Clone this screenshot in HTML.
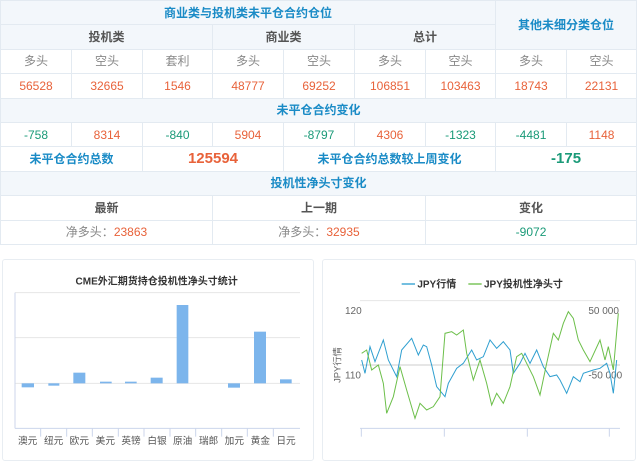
<!DOCTYPE html>
<html><head><meta charset="utf-8"><style>
body{margin:0;width:640px;height:450px;background:#fff;font-family:"Liberation Sans","Noto Sans CJK SC",sans-serif;overflow:hidden;position:relative}
table{position:absolute;left:0;top:0;width:636px;border-collapse:collapse;table-layout:fixed;font-size:12px}
td{border:1px solid #e3eaf1;text-align:center;height:23.4px;padding:0;line-height:14px}
.h{background:#f3f7fb;color:#1a8bc6;font-weight:bold}
.s{background:#f3f7fb;color:#555;font-weight:bold}
.g{color:#888}
.r{color:#e8623a}
.gr{color:#1a9a78}
.lb{color:#1a8bc6;font-weight:bold}
.big{font-size:15px;font-weight:bold}
.p{position:absolute;border:1px solid #e8edf2;border-radius:3px;background:#fff}
</style></head><body>
<table>
<colgroup><col style="width:71px"><col style="width:71px"><col style="width:70px"><col style="width:71px"><col style="width:71px"><col style="width:71px"><col style="width:70px"><col style="width:71px"><col style="width:70px"></colgroup>
<tr><td class="h" colspan="7">商业类与投机类未平仓合约仓位</td><td class="h" colspan="2" rowspan="2">其他未细分类仓位</td></tr>
<tr><td class="s" colspan="3">投机类</td><td class="s" colspan="2">商业类</td><td class="s" colspan="2">总计</td></tr>
<tr class="g"><td>多头</td><td>空头</td><td>套利</td><td>多头</td><td>空头</td><td>多头</td><td>空头</td><td>多头</td><td>空头</td></tr>
<tr class="r"><td>56528</td><td>32665</td><td>1546</td><td>48777</td><td>69252</td><td>106851</td><td>103463</td><td>18743</td><td>22131</td></tr>
<tr><td class="h" colspan="9">未平仓合约变化</td></tr>
<tr><td class="gr">-758</td><td class="r">8314</td><td class="gr">-840</td><td class="r">5904</td><td class="gr">-8797</td><td class="r">4306</td><td class="gr">-1323</td><td class="gr">-4481</td><td class="r">1148</td></tr>
<tr><td class="lb" colspan="2">未平仓合约总数</td><td class="r big" colspan="2">125594</td><td class="lb" colspan="3">未平仓合约总数较上周变化</td><td class="gr big" colspan="2">-175</td></tr>
<tr><td class="h" colspan="9">投机性净头寸变化</td></tr>
<tr><td class="s" colspan="3" style="background:#fff">最新</td><td class="s" colspan="3" style="background:#fff">上一期</td><td class="s" colspan="3" style="background:#fff">变化</td></tr>
<tr><td class="g" colspan="3">净多头：<span class="r">23863</span></td><td class="g" colspan="3">净多头：<span class="r">32935</span></td><td class="gr" colspan="3">-9072</td></tr>
</table>
<div class="p" style="left:2px;top:259px;width:310px;height:200px"></div>
<div class="p" style="left:322px;top:259px;width:312px;height:200px"></div>
<svg style="position:absolute;left:0;top:250px" width="320" height="200" viewBox="0 0 960 600" font-family="Liberation Sans,Noto Sans CJK SC,sans-serif">
<text x="470" y="104" font-size="30" font-weight="bold" fill="#333" text-anchor="middle">CME外汇期货持仓投机性净头寸统计</text>
<line x1="45" y1="128" x2="900" y2="128" stroke="#e6e6e6" stroke-width="3"/>
<line x1="45" y1="263" x2="900" y2="263" stroke="#e6e6e6" stroke-width="3"/>
<line x1="45" y1="400" x2="900" y2="400" stroke="#e6e6e6" stroke-width="3"/>
<line x1="45" y1="128" x2="45" y2="535" stroke="#ccd6eb" stroke-width="3"/>
<line x1="45" y1="535" x2="900" y2="535" stroke="#ccd6eb" stroke-width="3"/>
<g fill="#7cb5ec">
<rect x="65" y="400" width="37" height="12"/><rect x="145" y="400" width="33" height="7"/><rect x="220" y="368" width="36" height="32"/><rect x="300" y="395" width="35" height="5"/><rect x="375" y="395" width="35" height="5"/><rect x="452" y="383" width="36" height="17"/><rect x="530" y="165" width="35" height="235"/><rect x="684" y="400" width="36" height="13"/><rect x="762" y="245" width="36" height="155"/><rect x="840" y="388" width="35" height="12"/>
</g>
<g stroke="#ccd6eb" stroke-width="3"><line x1="122" y1="535" x2="122" y2="560"/><line x1="200" y1="535" x2="200" y2="560"/><line x1="277" y1="535" x2="277" y2="560"/><line x1="355" y1="535" x2="355" y2="560"/><line x1="432" y1="535" x2="432" y2="560"/><line x1="510" y1="535" x2="510" y2="560"/><line x1="587" y1="535" x2="587" y2="560"/><line x1="665" y1="535" x2="665" y2="560"/><line x1="742" y1="535" x2="742" y2="560"/><line x1="820" y1="535" x2="820" y2="560"/></g>
<g font-size="29" fill="#555" text-anchor="middle">
<text x="83" y="582">澳元</text><text x="161" y="582">纽元</text><text x="238" y="582">欧元</text><text x="316" y="582">美元</text><text x="393" y="582">英镑</text><text x="471" y="582">白银</text><text x="548" y="582">原油</text><text x="626" y="582">瑞郎</text><text x="703" y="582">加元</text><text x="781" y="582">黄金</text><text x="858" y="582">日元</text></g>
</svg>
<svg style="position:absolute;left:320px;top:250px" width="320" height="200" viewBox="0 0 960 600" font-family="Liberation Sans,Noto Sans CJK SC,sans-serif">
<line x1="245" y1="102" x2="285" y2="102" stroke="#2f9fd0" stroke-width="4"/>
<text x="292" y="113" font-size="30" font-weight="bold" fill="#333">JPY行情</text>
<line x1="445" y1="102" x2="485" y2="102" stroke="#6cbf4a" stroke-width="4"/>
<text x="492" y="113" font-size="30" font-weight="bold" fill="#333">JPY投机性净头寸</text>
<line x1="120" y1="152" x2="900" y2="152" stroke="#e6e6e6" stroke-width="3"/>
<line x1="120" y1="345" x2="900" y2="345" stroke="#ccc" stroke-width="3"/>
<line x1="120" y1="535" x2="900" y2="535" stroke="#ccd6eb" stroke-width="3"/>
<g stroke="#ccd6eb" stroke-width="3"><line x1="124" y1="535" x2="124" y2="560"/><line x1="373" y1="535" x2="373" y2="560"/><line x1="622" y1="535" x2="622" y2="560"/><line x1="868" y1="535" x2="868" y2="560"/></g>
<g font-size="30" fill="#666"><text x="75" y="192">120</text><text x="75" y="385">110</text><text x="805" y="192">50 000</text><text x="805" y="385">-50 000</text></g>
<text transform="translate(62,345) rotate(-90)" font-size="28" fill="#666" text-anchor="middle">JPY行情</text>
<polyline fill="none" stroke="#2f9fd0" stroke-width="3" points="125,330 135,370 150,290 165,335 190,270 205,330 230,380 245,300 275,265 295,315 310,285 320,290 335,345 350,410 375,440 385,400 410,355 430,340 455,300 470,330 490,320 510,270 530,295 550,275 570,300 580,370 600,340 615,310 630,340 650,300 670,350 690,380 710,375 720,390 740,430 760,380 780,395 790,370 820,360 840,355 860,340 870,370 880,430 890,330"/>
<polyline fill="none" stroke="#6cbf4a" stroke-width="3" points="125,310 140,300 155,360 175,345 190,400 200,490 220,440 240,350 260,420 285,505 300,460 320,480 340,470 360,440 375,250 395,245 410,255 430,240 440,310 460,390 480,330 500,400 515,465 530,430 550,460 570,410 590,320 605,310 620,340 640,380 660,435 680,340 700,250 715,270 730,220 745,185 760,205 775,270 790,300 810,335 840,270 855,330 865,290 880,360 895,190"/>
</svg>
</body></html>
